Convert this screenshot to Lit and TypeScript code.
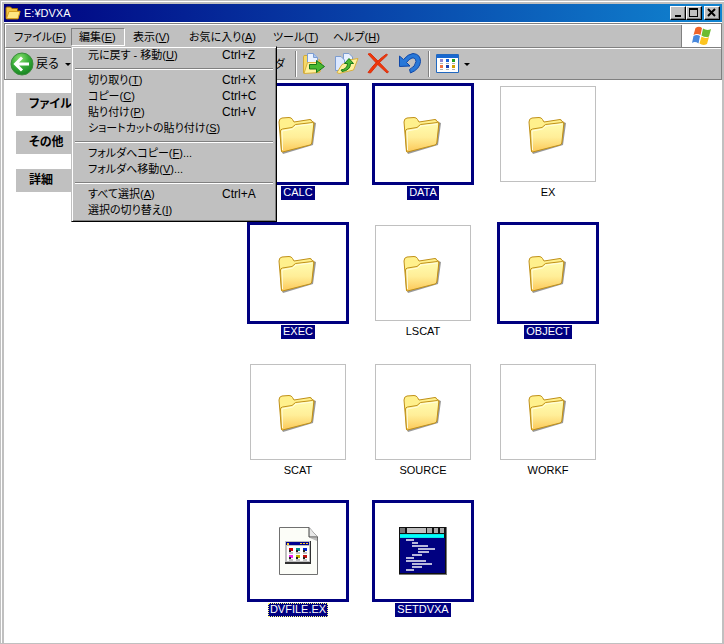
import { LitElement, html, css, svg } from "lit";
import { customElement } from "lit/decorators.js";
import { classMap } from "lit/directives/class-map.js";

type Command = { label: string; key: string; tail?: string; shortcut?: string };
type Entry = { name: string; kind: "folder" | "file" | "console"; selected?: boolean; focused?: boolean };

const MENUS: Command[] = [
  { label: "ファイル", key: "F" },
  { label: "編集", key: "E" },
  { label: "表示", key: "V" },
  { label: "お気に入り", key: "A" },
  { label: "ツール", key: "T" },
  { label: "ヘルプ", key: "H" },
];

const EDIT_GROUPS: Command[][] = [
  [{ label: "元に戻す - 移動", key: "U", shortcut: "Ctrl+Z" }],
  [
    { label: "切り取り", key: "T", shortcut: "Ctrl+X" },
    { label: "コピー", key: "C", shortcut: "Ctrl+C" },
    { label: "貼り付け", key: "P", shortcut: "Ctrl+V" },
    { label: "ショートカットの貼り付け", key: "S" },
  ],
  [
    { label: "フォルダへコピー", key: "F", tail: "..." },
    { label: "フォルダへ移動", key: "V", tail: "..." },
  ],
  [
    { label: "すべて選択", key: "A", shortcut: "Ctrl+A" },
    { label: "選択の切り替え", key: "I" },
  ],
];

const ENTRIES: Entry[] = [
  { name: "CALC", kind: "folder", selected: true },
  { name: "DATA", kind: "folder", selected: true },
  { name: "EX", kind: "folder" },
  { name: "EXEC", kind: "folder", selected: true },
  { name: "LSCAT", kind: "folder" },
  { name: "OBJECT", kind: "folder", selected: true },
  { name: "SCAT", kind: "folder" },
  { name: "SOURCE", kind: "folder" },
  { name: "WORKF", kind: "folder" },
  { name: "DVFILE.EX", kind: "file", selected: true, focused: true },
  { name: "SETDVXA", kind: "console", selected: true },
];

const folderIcon = html`<svg width="48" height="48" viewBox="0 0 48 48" aria-hidden="true">
  <defs>
    <linearGradient id="front" x1="0" y1="0" x2="0" y2="1">
      <stop offset="0" stop-color="#fffcb0" /><stop offset=".5" stop-color="#ffee98" /><stop offset="1" stop-color="#fcc858" />
    </linearGradient>
  </defs>
  <path d="M39 12L42 13L39 35L9 44L8 42L36 33Z" fill="#555" opacity=".6" />
  <path d="M5 12Q5 8.500 8 8L15 7.500Q17.500 7.500 18.500 9.500L20 12L36 9.500Q37.500 9.500 37.500 11L40 12.500L37.500 33L7.500 41.500Z" fill="#fff08c" stroke="#c09018" />
  <path d="M6.500 21Q6.500 19.500 8.500 19L18 17.500L21.500 14.500L38.500 12.500Q40 12.500 39.800 14L37.800 33Q37.500 34.500 36 35L8.500 42Q7.500 42 7.500 41Z" fill="url(#front)" stroke="#c09018" />
  <path d="M8.500 40L8 21L18.500 19L22 16L38 14" fill="none" stroke="#fffde0" />
</svg>`;

const colours = ["#d00000", "#009090", "#0020d0", "#f020f0", "#c0b000", "#c01010"];
const fileIcon = html`<svg width="48" height="48" viewBox="0 0 48 48" aria-hidden="true">
  <path d="M5.500 .5H35L43.500 10V47.500H5.500Z" fill="#fcfdf8" stroke="#707070" />
  <path d="M35 .5V10H43.500" fill="#e8e8e8" stroke="#404040" /><path d="M36 11H43V14Z" fill="#bbb" />
  <path d="M11 14H37V37H11Z" fill="#303030" /><path d="M11 14H36V35H11Z" fill="#c0c0c0" />
  <path d="M12 15H35V18H12Z" fill="#000090" /><path d="M13 16H15V18H13ZM26 16H28V17H26ZM29 16H31V17H29ZM32 16H34V17H32Z" fill="#ffd020" />
  <path d="M13 19H35V34H13Z" fill="#fff" />
  ${colours.map((c, i) => {
    const x = 15 + (i % 3) * 7;
    const y = 21 + Math.floor(i / 3) * 7;
    return svg`<path d="M${x} ${y}h4v3h-4z" fill="${c}" /><path d="M${x} ${y + 2}h2v2h-2z" fill="#222" /><path d="M${x} ${y + 5}h4" stroke="#888" />`;
  })}
</svg>`;

const consoleLines = [[7, 8], [13, 6], [13, 16], [19, 17], [19, 11], [13, 10], [7, 8], [7, 20], [13, 20], [13, 10], [7, 8]];
const consoleIcon = html`<svg width="48" height="48" viewBox="0 0 48 48" aria-hidden="true" shape-rendering="crispEdges">
  <path d="M0 0H48V48H0Z" fill="#777" /><path d="M0 0H47V47H0Z" fill="#101010" />
  <path d="M1 1H6V6H1Z" fill="#777" /><path d="M8 1H27V6H8Z" fill="#c0c0c0" /><path d="M28 1H33V6H28ZM35 1H39V6H35ZM41 1H45V6H41Z" fill="#aaa" />
  <path d="M1 7H45V11H1Z" fill="#00e8e8" /><path d="M1 11H46V46H1Z" fill="#000080" />
  <path d="M1 8H45V10H1Z" fill="#00ffff" />
  ${consoleLines.map(([x, w], i) => svg`<path d="M${x} ${12 + i * 3}h${w}v2h-${w}z" fill="#b8b8dc" />`)}
</svg>`;

const smallFolder = html`<svg width="16" height="16" viewBox="0 0 16 16" aria-hidden="true">
  <path d="M1 13.500V3Q1 2 2 2H5.500L7 3.500H12.500V6H15L13 14H2Z" fill="#f5c542" stroke="#9a6a08" />
  <path d="M1.500 13.500L4 6.500H15L13 13.500Z" fill="#ffe682" stroke="#d8a020" />
</svg>`;

const backIcon = html`<svg width="24" height="24" viewBox="0 0 24 24" aria-hidden="true">
  <defs><radialGradient id="back" cx=".4" cy=".25" r=".8"><stop offset="0" stop-color="#8be070" /><stop offset=".5" stop-color="#38ad38" /><stop offset="1" stop-color="#128020" /></radialGradient></defs>
  <circle cx="12" cy="12" r="11" fill="url(#back)" stroke="#3c8c3c" />
  <path d="M12 5.500L5.500 12L12 18.500M6 12H19" fill="none" stroke="#fff" stroke-width="3" />
</svg>`;

const moveIcon = html`<svg width="24" height="24" viewBox="0 0 24 24" aria-hidden="true">
  <path d="M.5 21V4.500Q.5 3.500 2 3.500H5V8H17V20Z" fill="#f6d868" stroke="#d0a838" />
  <path d="M4.500 1.500H10.500L14.500 5.500V14H4.500Z" fill="#eaf2ff" stroke="#7c9cd0" />
  <path d="M10.500 1.500V5.500H14.500" fill="#a8c4f0" stroke="#7c9cd0" />
  <path d="M1 21.500L4.500 10.500H18.500L16.500 20.500Z" fill="#fff09c" stroke="#d8b040" />
  <path d="M6.500 12.500H13.500V8.500L21.500 14.500L13.500 20.500V17H6.500Z" fill="#48b830" stroke="#187818" /></svg>`;

const copyIcon = html`<svg width="24" height="24" viewBox="0 0 24 24" aria-hidden="true">
  <path d="M8.500 1.500H14L17.500 5V14H8.500Z" fill="#e8f0ff" stroke="#7c9cd0" />
  <path d="M.5 4.500H6L9.500 8V18.500H.5Z" fill="#dce8ff" stroke="#7c9cd0" />
  <path d="M2 20.500L7 12.500L12 10.500L14 8L23 6.500L18.500 18L4 21.500Z" fill="#fff09c" stroke="#d8b040" />
  <path d="M6 18Q12.500 17 12.500 11.500H9.500L14 6.500L18.500 11.500H15.500Q15.500 18.500 7 19.500Z" fill="#48b830" stroke="#187818" /></svg>`;

const deleteIcon = html`<svg width="24" height="24" viewBox="0 0 24 24" aria-hidden="true">
  <path d="M1 2L3.500 1.500Q12 10 21.500 20L20 21Q10 12.500 1 2Z" fill="#f03808" stroke="#d83010" />
  <path d="M19.500 2L20.500 3Q11 11 3.500 21L1 20.500Q8 10 19.500 2Z" fill="#f03808" stroke="#d83010" /></svg>`;

const undoIcon = html`<svg width="24" height="24" viewBox="0 0 24 24" aria-hidden="true">
  <path d="M.5 4L4.500 7.500Q9 2 14 1.500Q21.500 2 21.500 9.500Q21 17 11.500 21L10.500 17.500Q16.500 14.500 17 9.500Q16.500 5.500 13 6Q10 7 7.500 10.500L11 14L.5 14.500Z" fill="#2878d8" stroke="#1048a8" /></svg>`;

const viewsIcon = html`<svg width="24" height="20" viewBox="0 0 24 20" aria-hidden="true">
  <path d="M.5 .5H22.500V18.500H.5Z" fill="#fff" stroke="#2068c0" /><path d="M1 1H22V4H1Z" fill="#1868d0" />
  ${["#9088d0", "#1860d8", "#20a020", "#f07040", "#1840b0", "#d0a000"].map((c, i) => {
    const x = 4 + (i % 3) * 6;
    const y = 5 + Math.floor(i / 3) * 6;
    return svg`<path d="M${x} ${y}h3v3h-3z" fill="${c}" /><path d="M${x} ${y + 4}h3v1h-3z" fill="#b0b0b0" />`;
  })}</svg>`;

const flagIcon = html`<svg width="22" height="20" viewBox="0 0 22 20" aria-hidden="true">
  <path d="M4.500 2Q8-.5 11 2L9.500 9Q6 7 2.500 9Z" fill="#f06428" />
  <path d="M12 2.500Q16 5 20 3L18 10.500Q14.500 12 10.500 9.500Z" fill="#6cbc30" />
  <path d="M2.500 10Q6 8 9 10L7.500 17.500Q4 15 1 17Z" fill="#4888dc" />
  <path d="M10.500 10.500Q14 13 18 11L16 18Q12 20 8.500 17.500Z" fill="#fcc420" /></svg>`;

const ICONS = { folder: folderIcon, file: fileIcon, console: consoleIcon };

const commandText = (c: Command) => html`<span>${c.label}(<u>${c.key}</u>)${c.tail ?? ""}</span>`;

@customElement("app-root")
export class AppRoot extends LitElement {
  static styles = css`
    :host {
      display: block;
      font: 11px/16px "Liberation Sans", "Noto Sans CJK JP", sans-serif;
      font-feature-settings: "palt";
      color: #000;
    }
    * { box-sizing: border-box; }
    button { font: inherit; font-feature-settings: inherit; color: inherit; background: none; border: 0; padding: 0; margin: 0; white-space: nowrap; }
    svg { display: block; flex: none; }
    .window {
      display: flex; flex-direction: column; min-height: 100vh;
      background: #fff; border: solid #c0c0c0; border-width: 1px 0 1px 1px;
    }
    .frame { flex: 1; display: flex; flex-direction: column; border: solid #fff; border-width: 1px 0 0 1px; }
    .inner { flex: 1; display: flex; flex-direction: column; border: 2px solid #c0c0c0; border-bottom: 0; }
    .title {
      display: flex; align-items: center; height: 18px; padding: 0 2px 0 1px; color: #fff;
      background: linear-gradient(90deg, #000080, #1084d0);
    }
    .title h1 { flex: 1; margin: 0 0 0 3px; font-size: 11px; font-weight: 400; }
    .caption {
      display: grid; place-items: center; width: 16px; height: 14px; background: #c0c0c0;
      border: 1px solid; border-color: #fff #000 #000 #fff; box-shadow: inset -1px -1px #808080;
    }
    .close { margin-left: 2px; }
    .bars { margin-top: 1px; background: #c0c0c0; border: 1px solid #808080; }
    .menubar { display: flex; height: 24px; border: solid; border-width: 1px 0 1px 1px; border-color: #fff #fff #808080 #fff; }
    .menus {
      flex: 1; display: grid; grid-template-columns: 65px 54px 56px 84px 60px auto; justify-content: start;
      align-items: center; padding-top: 2px; border-right: 1px solid #808080;
    }
    .menu { position: relative; }
    .menu > button { width: 100%; height: 18px; padding: 0 0 0 7px; border: 1px solid transparent; text-align: left; }
    .menu > .open { border-color: #808080 #fff #fff #808080; }
    .brand { display: grid; place-items: center; width: 39px; background: #fff; }
    .popup {
      position: absolute; left: 0; top: 100%; z-index: 1; width: 206px; padding: 0 3px 3px; background: #c0c0c0;
      border: 1px solid; border-color: #c0c0c0 #000 #000 #c0c0c0; box-shadow: inset 1px 1px #fff, inset -1px -1px #808080;
    }
    .item { display: flex; width: 100%; height: 16px; padding: 0 0 0 13px; text-align: left; }
    .item span { flex: 1; }
    .item kbd { width: 51px; font: inherit; font-size: 12px; }
    hr { height: 2px; margin: 5px 0 2px; border: solid; border-width: 1px 0; border-color: #808080 transparent #fff; }
    .toolbar { display: flex; align-items: center; height: 31px; padding-left: 4px; border: solid #fff; border-width: 1px 0 0 1px; }
    .tool { display: flex; align-items: center; height: 24px; gap: 4px; }
    .drop { width: 0; border: 3px solid transparent; border-top-color: #000; border-bottom: 0; }
    .back { gap: 2px; font-size: 12px; }
    .history { padding-left: 6px; }
    .folders { width: 224px; padding-right: 10px; justify-content: flex-end; }
    .divider { width: 2px; height: 26px; background: linear-gradient(90deg, #808080 50%, #fff 50%); }
    .tools { display: flex; gap: 8px; padding: 0 5px 0 6px; }
    .views { margin-left: 6px; }
    .body { flex: 1; display: flex; }
    .side { flex: none; width: 243px; padding: 13px 22px 0 12px; }
    .side h2 { height: 23px; margin: 0 0 15px; padding-left: 13px; background: #c0c0c0; font-size: 12px; font-weight: 700; line-height: 23px; }
    .files {
      flex: 1; display: grid; grid-template-columns: repeat(auto-fill, 102px); gap: 22px 23px;
      align-content: start; margin: 0; padding: 3px 0 24px; list-style: none;
    }
    .file { display: flex; flex-direction: column; align-items: center; gap: 1px; width: 102px; }
    .thumb { display: grid; place-items: center; width: 96px; height: 96px; margin: 3px; border: 1px solid #c0c0c0; }
    .selected .thumb { width: 102px; height: 102px; margin: 0; border: 3px solid #000080; }
    .name { height: 14px; padding: 0 1px; line-height: 11px; border: 1px solid transparent; }
    .selected .name { background: #000080; color: #fff; border-color: #000080; }
    .focused .name { border: 1px dotted #ffff7f; }
  `;

  render() {
    return html`<main class="window"><div class="frame"><div class="inner">
      <header class="title">
        ${smallFolder}
        <h1>E:¥DVXA</h1>
        <button class="caption" aria-label="最小化"><svg width="12" height="10"><path d="M3 7H9V9H3Z" /></svg></button>
        <button class="caption" aria-label="最大化"><svg width="12" height="10"><path d="M1 0H10V9H1ZM2 2V8H9V2Z" fill-rule="evenodd" /></svg></button>
        <button class="caption close" aria-label="閉じる"><svg width="12" height="10"><path d="M2 1L9 8M9 1L2 8" stroke="#000" stroke-width="2" /></svg></button>
      </header>
      <div class="bars">
        <div class="menubar">
          <nav class="menus">
            ${MENUS.map((m) => html`<div class="menu">
              <button class=${classMap({ open: m.key === "E" })}>${commandText(m)}</button>
              ${m.key === "E" ? this.editMenu() : ""}
            </div>`)}
          </nav>
          <div class="brand">${flagIcon}</div>
        </div>
        <div class="toolbar">
          <button class="tool back">${backIcon}<span>戻る</span></button>
          <button class="tool history" aria-label="戻る履歴"><i class="drop"></i></button>
          <button class="tool folders">フォルダ</button>
          <div class="divider"></div>
          <div class="tools">
            <button class="tool" aria-label="移動先">${moveIcon}</button>
            <button class="tool" aria-label="コピー先">${copyIcon}</button>
            <button class="tool" aria-label="削除">${deleteIcon}</button>
            <button class="tool" aria-label="元に戻す">${undoIcon}</button>
          </div>
          <div class="divider"></div>
          <button class="tool views" aria-label="表示">${viewsIcon}<i class="drop"></i></button>
        </div>
      </div>
      <div class="body">
        <aside class="side"><h2>ファイルと</h2><h2>その他</h2><h2>詳細</h2></aside>
        <ul class="files">
          ${ENTRIES.map((e) => html`<li>
            <button class=${classMap({ file: true, selected: !!e.selected, focused: !!e.focused })}>
              <span class="thumb">${ICONS[e.kind]}</span><span class="name">${e.name}</span>
            </button>
          </li>`)}
        </ul>
      </div>
    </div></div></main>`;
  }

  private editMenu() {
    return html`<div class="popup">
      ${EDIT_GROUPS.map((group, i) => html`${i ? html`<hr />` : ""}
        ${group.map((c) => html`<button class="item">${commandText(c)}${c.shortcut ? html`<kbd>${c.shortcut}</kbd>` : ""}</button>`)}`)}
    </div>`;
  }
}
